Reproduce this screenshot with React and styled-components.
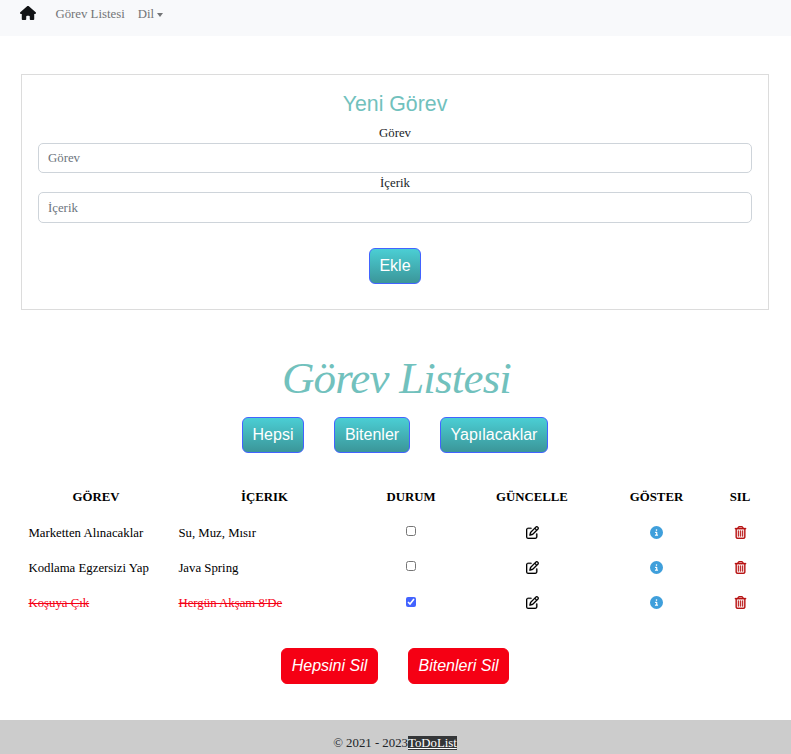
import React, { useState } from "react";
import styled, { createGlobalStyle } from "styled-components";
import { FaHouse, FaRegPenToSquare, FaCircleInfo, FaRegTrashCan } from "react-icons/fa6";

const GlobalStyle = createGlobalStyle`
  *, *::before, *::after { box-sizing: border-box; }
  body {
    margin: 0;
    background: #fff;
    color: #212529;
    font: 12.8px/19.2px "Liberation Serif", "Times New Roman", serif;
    overflow: hidden;
  }
`;

const Page = styled.div`
  display: flex;
  flex-direction: column;
  height: 754px;
`;

const Navbar = styled.nav`
  display: flex;
  align-items: flex-start;
  height: 36px;
  padding: 5px 20px 0;
  background: #f8f9fb;
  color: #737577;
`;

const HomeLink = styled.a`
  display: flex;
  width: 35.4px;
  color: #111315;
`;

const NavLink = styled.a`
  display: flex;
  align-items: center;
  height: 20px;
  margin-right: 13px;
`;

const Caret = styled.span`
  margin: 0 0 1px 3px;
  border-top: 4px solid currentColor;
  border-left: 3.5px solid transparent;
  border-right: 3.5px solid transparent;
`;

const FormCard = styled.form`
  display: flex;
  flex-direction: column;
  align-items: center;
  width: 748px;
  height: 236px;
  margin: 38px 0 0 21px;
  padding: 15px 16px 0;
  border: 1px solid #dcdcdc;
`;

const FormTitle = styled.h1`
  margin: 0;
  height: 33px;
  color: #71c1bd;
  font: 400 21.3px/28px "Liberation Sans", Arial, sans-serif;
`;

const Label = styled.label`
  height: ${({ $height }) => $height}px;
  line-height: 20px;
`;

const Input = styled.input`
  width: 714px;
  height: ${({ $height }) => $height}px;
  padding: ${({ $height }) => $height - 30}px 9px 0;
  border: 1px solid #ced4da;
  border-radius: 5px;
  background: #fff;
  font: inherit;
  &::placeholder { color: #6c757d; opacity: 1; }
`;

const Button = styled.button`
  width: ${({ $width }) => $width}px;
  height: 36px;
  padding: 0 0 1px;
  border: 1px solid #4263ff;
  border-radius: 6px;
  background: linear-gradient(#4bced4, #3b9699);
  color: #fff;
  font: 16px/24px "Liberation Sans", Arial, sans-serif;
  white-space: nowrap;
`;

const AddButton = styled(Button)`
  margin-top: 25px;
`;

const DangerButton = styled(Button)`
  border-color: #f50014;
  background: #f50014;
  font-style: italic;
`;

const ListTitle = styled.h2`
  height: 64px;
  margin: 43px 0 0 2px;
  color: #71c1bd;
  text-align: center;
  font: italic 400 45px/50px "Apple Chancery", "Liberation Serif", cursive;
  letter-spacing: -0.8px;
`;

const ButtonRow = styled.div`
  display: flex;
  justify-content: center;
  gap: 30px;
  margin-right: 1px;
`;

const Table = styled.table`
  width: 746px;
  margin: 26px 0 0 21px;
  border-collapse: collapse;
  table-layout: fixed;
  color: #000;
`;

const Column = styled.col`
  width: ${({ $width }) => $width}px;
`;

const Row = styled.tr`
  height: 35px;
  color: ${({ $done }) => ($done ? "#f50014" : "#000")};
`;

const HeaderCell = styled.th`
  height: 36px;
  padding: 2px 0 0;
  font-weight: 700;
`;

const TextCell = styled.td`
  padding: 3px 7px 0 7.4px;
  text-decoration: ${({ $done }) => ($done ? "line-through" : "none")};
`;

const ControlCell = styled.td`
  padding: 0;
  text-align: center;
`;

const Checkbox = styled.input`
  display: block;
  width: 10px;
  height: 10px;
  margin: 0 auto ${({ checked }) => (checked ? 2 : 3)}px;
  accent-color: #4263ff;
`;

const IconButton = styled.a`
  display: flex;
  justify-content: center;
  color: ${({ $color }) => $color};
  svg { stroke-width: ${({ $stroke = 0 }) => $stroke}px; }
`;

const DeleteRow = styled(ButtonRow)`
  margin-top: 28px;
`;

const Footer = styled.footer`
  height: 34px;
  margin-top: auto;
  padding: 14px 1px 0 0;
  background: #ccc;
  text-align: center;
`;

const FooterLink = styled.a`
  background: #343638;
  color: #fff;
  text-decoration: underline;
`;

const columns = [
  ["GÖREV", 150], ["İÇERIK", 187], ["DURUM", 106],
  ["GÜNCELLE", 136], ["GÖSTER", 113], ["SIL", 54],
];

const initialTasks = [
  { title: "Marketten Alınacaklar", content: "Su, Muz, Mısır", done: false },
  { title: "Kodlama Egzersizi Yap", content: "Java Spring", done: false },
  { title: "Koşuya Çık", content: "Hergün Akşam 8'De", done: true },
];

export default function App() {
  const [tasks, setTasks] = useState(initialTasks);
  const toggle = (index) =>
    setTasks(tasks.map((task, i) => (i === index ? { ...task, done: !task.done } : task)));

  return (
    <Page>
      <GlobalStyle />
      <Navbar>
        <HomeLink><FaHouse size={16} /></HomeLink>
        <NavLink>Görev Listesi</NavLink>
        <NavLink>Dil<Caret /></NavLink>
      </Navbar>
      <FormCard onSubmit={(event) => event.preventDefault()}>
        <FormTitle>Yeni Görev</FormTitle>
        <Label $height={20} htmlFor="task">Görev</Label>
        <Input $height={30} id="task" placeholder="Görev" />
        <Label $height={19} htmlFor="content">İçerik</Label>
        <Input $height={31} id="content" placeholder="İçerik" />
        <AddButton $width={52}>Ekle</AddButton>
      </FormCard>
      <ListTitle>Görev Listesi</ListTitle>
      <ButtonRow>
        <Button $width={62}>Hepsi</Button>
        <Button $width={76}>Bitenler</Button>
        <Button $width={108}>Yapılacaklar</Button>
      </ButtonRow>
      <Table>
        <colgroup>
          {columns.map(([name, width]) => <Column key={name} $width={width} />)}
        </colgroup>
        <thead>
          <tr>{columns.map(([name]) => <HeaderCell key={name}>{name}</HeaderCell>)}</tr>
        </thead>
        <tbody>
          {tasks.map((task, index) => (
            <Row key={task.title} $done={task.done}>
              <TextCell $done={task.done}>{task.title}</TextCell>
              <TextCell $done={task.done}>{task.content}</TextCell>
              <ControlCell>
                <Checkbox type="checkbox" checked={task.done} onChange={() => toggle(index)} />
              </ControlCell>
              <ControlCell><IconButton $color="#000" $stroke={8}><FaRegPenToSquare size={13} /></IconButton></ControlCell>
              <ControlCell><IconButton $color="#3f9fdb"><FaCircleInfo size={13} /></IconButton></ControlCell>
              <ControlCell><IconButton $color="#b81414" $stroke={12}><FaRegTrashCan size={13} /></IconButton></ControlCell>
            </Row>
          ))}
        </tbody>
      </Table>
      <DeleteRow>
        <DangerButton $width={97}>Hepsini Sil</DangerButton>
        <DangerButton $width={101}>Bitenleri Sil</DangerButton>
      </DeleteRow>
      <Footer>© 2021 - 2023<FooterLink>ToDoList</FooterLink></Footer>
    </Page>
  );
}
